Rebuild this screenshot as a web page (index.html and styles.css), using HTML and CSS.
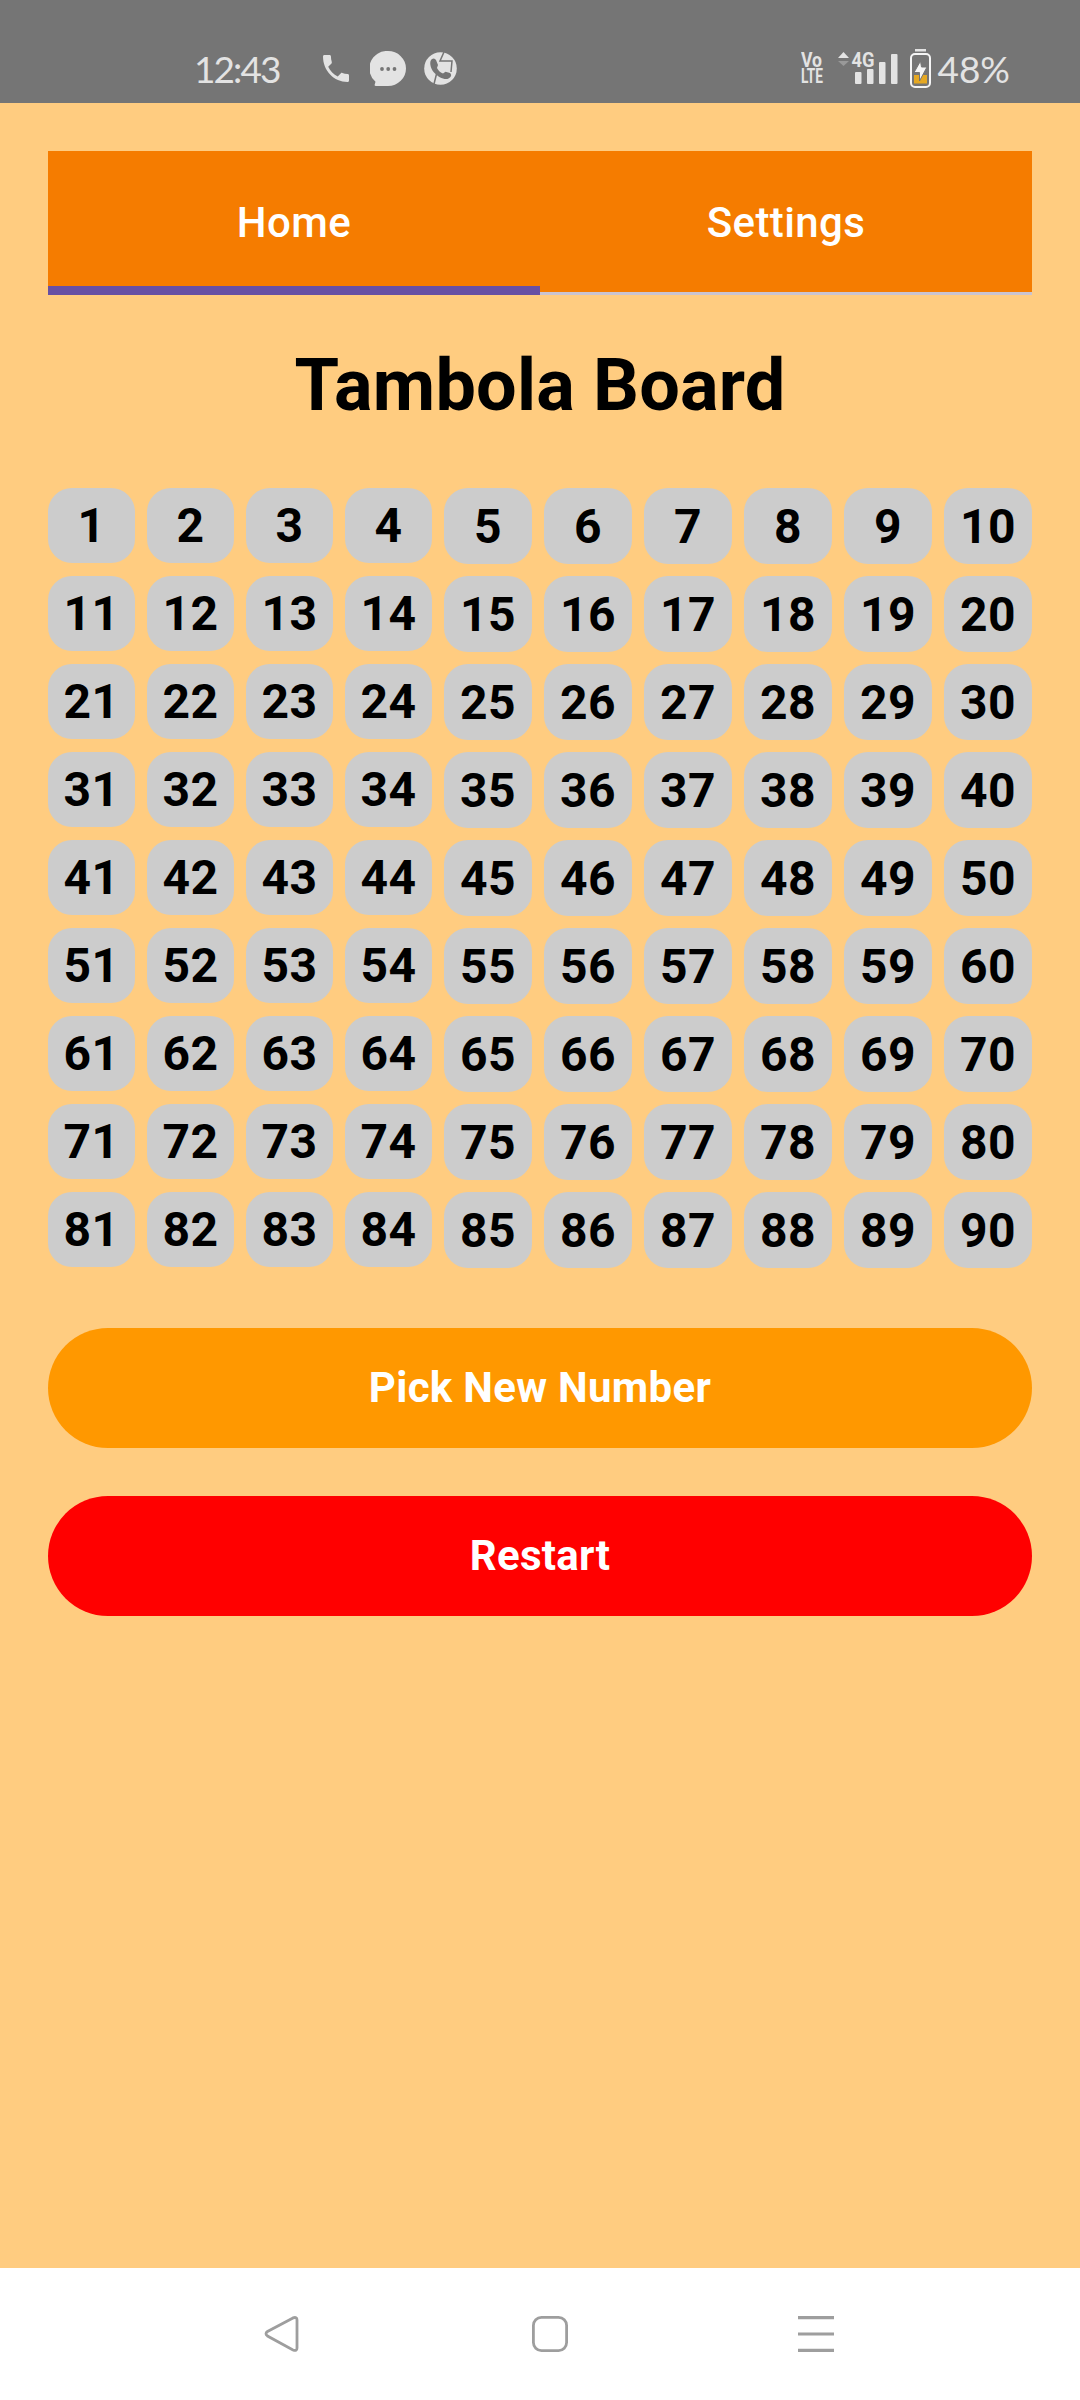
FILE: index.html
```
<!DOCTYPE html>
<html lang="en">
<head>
    <meta charset="UTF-8">
    <meta name="viewport" content="width=device-width, initial-scale=1.0">
    <title>Tambola Board</title>
    <link rel="stylesheet" href="styles.css">
</head>
<body>
    <header class="status-bar">
        <span class="clock">12:43</span>
        <svg class="icon-phone" width="26" height="27" viewBox="3 3 18 18" preserveAspectRatio="none"><path d="M6.6 10.8c1.4 2.8 3.8 5.1 6.600 6.600l2.200-2.200c.3-.3.7-.4 1-.2 1.100.4 2.300.6 3.600.6.6 0 1 .4 1 1V20c0 .6-.4 1-1 1C10.600 21 3 13.400 3 4c0-.6.4-1 1-1h3.500c.6 0 1 .4 1 1 0 1.200.2 2.400.6 3.600.1.3 0 .7-.2 1z"/></svg>
        <svg class="icon-chat" width="36" height="35" viewBox="0 0 36 35">
            <path d="M18 0a18 17.500 0 0 1 0 35H6q-2 0-1.200-1.800l.7-2.400A17.500 17.500 0 0 1 18 0z"/>
            <g class="cutout"><circle cx="12" cy="18" r="1.900"/><circle cx="18.200" cy="18" r="1.900"/><circle cx="24.500" cy="18" r="1.900"/></g>
        </svg>
        <svg class="icon-caller" width="33" height="33" viewBox="0 0 33 33">
            <circle cx="16.500" cy="16.500" r="16.300"/>
            <path class="line" d="M20 0l-4 9h12l-1 11M12.500 22l-2.500 10"/>
            <path class="cutout" d="M8 7C5 9 6 16 10 20.500s11 8 14.500 6 3-4 1.500-5.500l-4.500-1.200-2.500 1.700c-3-1-5-3.500-6-5.500l1-3-2-5q-1.500-2.500-4-1z"/>
        </svg>
        <div class="status-right">
            <svg class="icon-volte" width="24" height="32" viewBox="0 0 24 32">
                <text x="0" y="15" textLength="21" lengthAdjust="spacingAndGlyphs">Vo</text>
                <text x="0" y="31" textLength="22" lengthAdjust="spacingAndGlyphs">LTE</text>
            </svg>
            <svg class="icon-signal" width="62" height="34" viewBox="0 0 62 34">
                <path d="M0 7l5.500-6L11 7z"/>
                <path class="dim" d="M0 10h11l-5.500 5z"/>
                <rect x="17" y="21" width="6.500" height="12" rx="1"/>
                <rect x="29" y="18" width="6.500" height="15" rx="1"/>
                <rect x="41" y="11" width="6.500" height="22" rx="1"/>
                <rect x="53" y="3" width="6.500" height="30" rx="1"/>
                <text x="13.500" y="16.300" textLength="23" lengthAdjust="spacingAndGlyphs">4G</text>
            </svg>
            <svg class="icon-battery" width="21" height="39" viewBox="0 0 21 39">
                <rect x="5" y="0" width="11" height="2.500"/>
                <rect class="case" x="1" y="5" width="19" height="33" rx="4"/>
                <path class="charge" d="M4 26h13v8.500H4z"/>
                <path class="bolt" d="M10.500 12L4 23.500h5.500V32l7.500-14h-5.500z"/>
            </svg>
            <span class="percent">48%</span>
        </div>
    </header>

    <main class="screen">
        <nav class="tabs">
            <a class="tab active">Home</a>
            <a class="tab">Settings</a>
        </nav>
        <h1 class="title">Tambola Board</h1>
        <div class="board" id="board"></div>
        <button class="btn btn-pick">Pick New Number</button>
        <button class="btn btn-restart">Restart</button>
    </main>

    <footer class="nav-bar">
        <svg width="36" height="36" viewBox="0 0 36 36"><path d="M29 1.900L3.500 15.500q-3 2 0 4.500L29 34q4 1.500 4-2V4q0-3.500-4-2.100z"/></svg>
        <svg class="nav-home" width="36" height="36" viewBox="0 0 36 36"><rect x="1.400" y="1.400" width="33.200" height="33.200" rx="8"/></svg>
        <svg width="36" height="36" viewBox="0 0 36 36"><path class="bars" d="M0 1.600h36M0 18h36M0 34.400h36"/></svg>
    </footer>

    <script>
        const board = document.getElementById('board');
        for (let i = 1; i <= 90; i++) {
            const cell = document.createElement('div');
            cell.className = 'cell';
            cell.textContent = i;
            board.appendChild(cell);
        }
    </script>
</body>
</html>
```
FILE: styles.css
```
* {
    box-sizing: border-box;
}
body {
    margin: 0;
    width: 1080px;
    height: 2400px;
    display: flex;
    flex-direction: column;
    font-family: Roboto, sans-serif;
    background: #ffcc80;
    color: #000;
}
.status-bar {
    height: 103px;
    padding: 33px 70px 0 194px;
    display: flex;
    align-items: center;
    background: #757575;
    color: #e3e3e3;
    fill: #e3e3e3;
}
.clock, .percent {
    font-family: Lato, sans-serif;
    font-size: 37px;
    line-height: 40px;
}
.clock {
    width: 129px;
    padding-top: 2px;
    letter-spacing: -1.9px;
}
.percent {
    padding-top: 2px;
}
.icon-chat {
    margin-left: 21px;
}
.icon-caller {
    margin-left: 18px;
}
.cutout {
    fill: #757575;
}
.line {
    fill: none;
    stroke: #757575;
    stroke-width: 1.5;
}
.status-right {
    margin-left: auto;
    display: flex;
    align-items: center;
}
.icon-volte {
    margin-right: 13px;
}
.icon-volte text {
    font-size: 20px;
    font-weight: 700;
}
.icon-signal text {
    font-size: 21px;
    font-weight: 700;
}
.dim {
    fill: #999;
}
.icon-battery {
    margin: 0 6px 0 10px;
}
.case {
    fill: none;
    stroke: #f5f5f5;
    stroke-width: 2;
}
.charge {
    fill: #e5a823;
}
.bolt {
    fill: #f5f5f5;
    stroke: #757575;
}
.screen {
    flex: 1;
    padding: 48px 48px 0;
}
.tabs {
    display: flex;
    height: 144px;
}
.tab {
    flex: 1;
    padding-top: 47px;
    text-align: center;
    font-size: 42px;
    line-height: 50px;
    font-weight: 500;
    letter-spacing: 0.4px;
    color: #fff;
    background: #f57c00;
    border-bottom: 3px solid #cac4d0;
}
.tab.active {
    border-bottom: 9px solid #6750a4;
}
.title {
    margin: 48px 0 60px;
    font-size: 72px;
    line-height: 85px;
    font-weight: 700;
    letter-spacing: 0.2px;
    text-align: center;
}
.board {
    display: grid;
    grid-template-columns: repeat(4, 87px) repeat(6, 88px);
    grid-auto-rows: 76px;
    gap: 12px;
    margin-bottom: 60px;
}
.cell {
    height: 76px;
    border-radius: 24px;
    background: #ccc;
    text-align: center;
    font-size: 48px;
    line-height: 78px;
    font-weight: 700;
    letter-spacing: 0.4px;
}
/* the narrower columns are also 1px shorter */
.cell:nth-child(10n+1),
.cell:nth-child(10n+2),
.cell:nth-child(10n+3),
.cell:nth-child(10n+4) {
    height: 75px;
    line-height: 76px;
}
.btn {
    display: block;
    width: 100%;
    height: 120px;
    margin-bottom: 48px;
    padding: 0 0 2px;
    border: none;
    border-radius: 60px;
    font-family: inherit;
    font-size: 42px;
    font-weight: 700;
    letter-spacing: 0.3px;
    color: #fff;
}
.btn-pick {
    background: #ff9800;
}
.btn-restart {
    background: #f00;
}
.nav-bar {
    height: 132px;
    padding: 48px 246px 0 264px;
    display: flex;
    justify-content: space-between;
    background: #fff;
}
.nav-bar svg {
    fill: none;
    stroke: #9e9e9e;
    stroke-width: 2.8;
}
/* sits a touch right of centre */
.nav-home {
    margin-left: 2px;
}
.bars {
    stroke-width: 3.2;
}
```
